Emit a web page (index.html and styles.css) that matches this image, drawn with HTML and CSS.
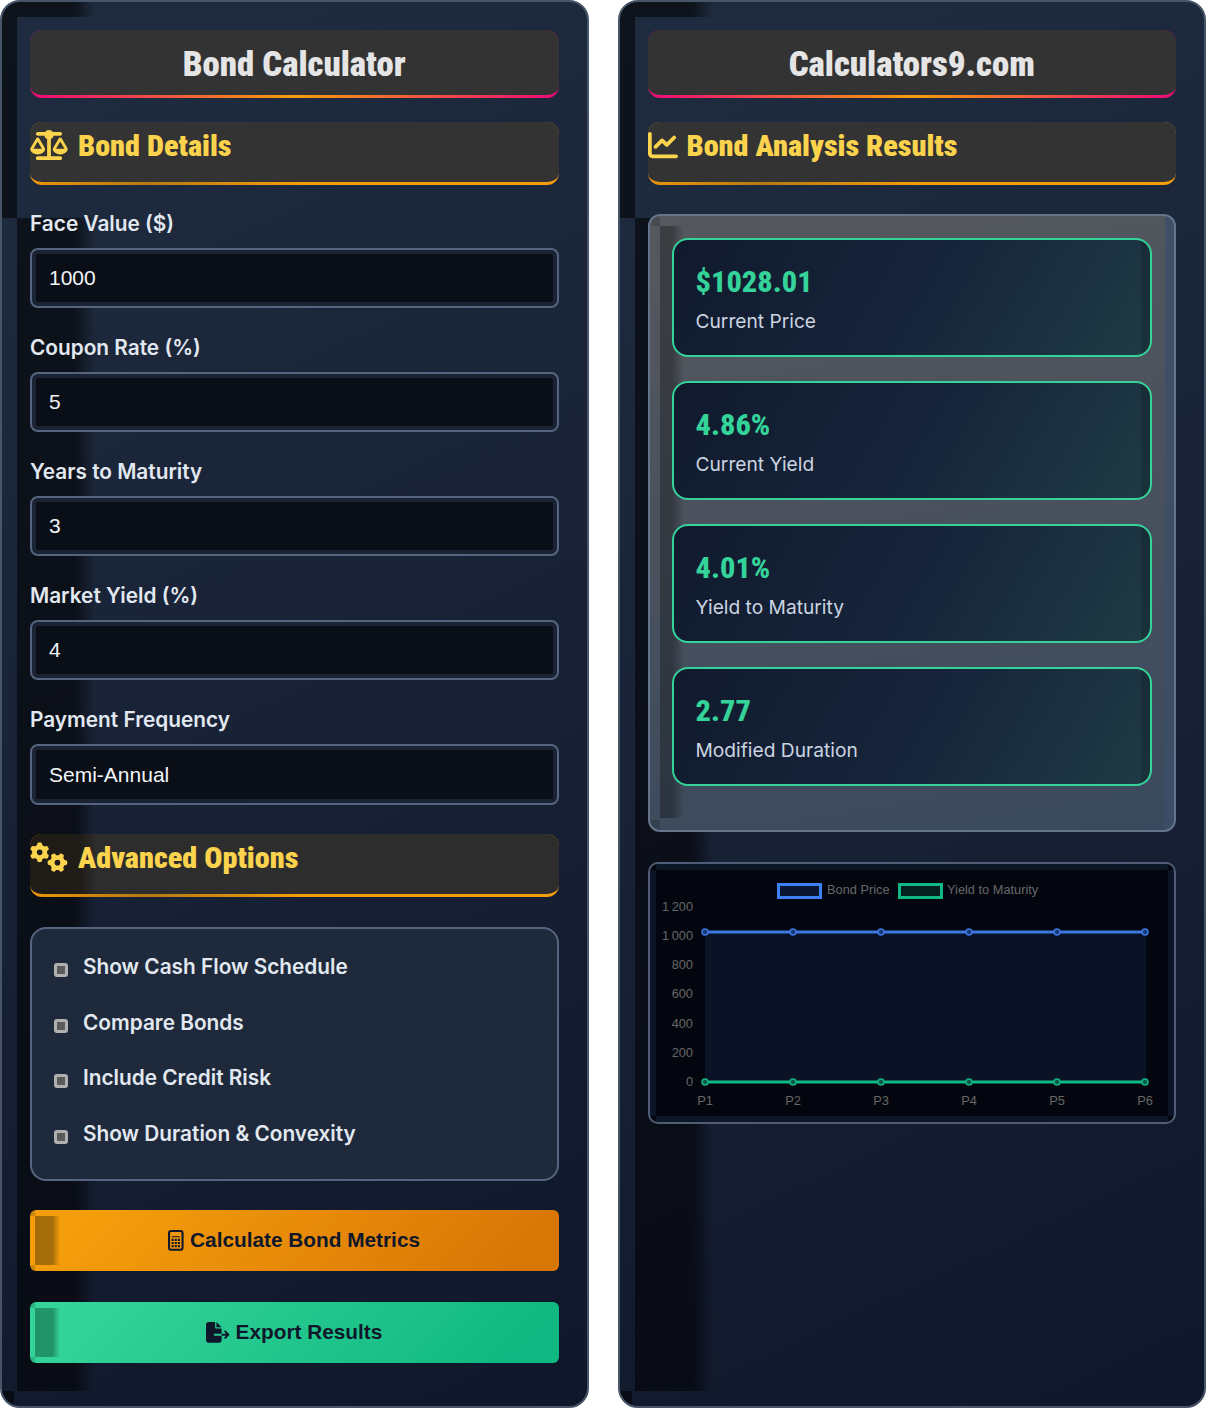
FILE: index.html
```html
<!DOCTYPE html>
<html lang="en">
<head>
<meta charset="utf-8">
<title>Bond Calculator</title>
<link rel="stylesheet" href="styles.css">
</head>
<body>
<main class="app">
  <section class="panel">
    <h1 class="title">Bond Calculator</h1>
    <h2 class="section"><svg class="ico wide" viewBox="0 0 640 512"><path fill="currentColor" d="M384 32H512c17.7 0 32 14.3 32 32s-14.3 32-32 32H398.4c-5.2 25.8-22.9 47.1-46.4 57.3V448H512c17.7 0 32 14.3 32 32s-14.3 32-32 32H320 128c-17.7 0-32-14.3-32-32s14.3-32 32-32H288V153.3c-23.5-10.3-41.2-31.6-46.4-57.3H128c-17.7 0-32-14.3-32-32s14.3-32 32-32H256c14.6-19.4 37.8-32 64-32s49.4 12.6 64 32zm55.6 288H584.4L512 195.8 439.6 320zM512 416c-62.9 0-115.2-34-126-78.9c-2.6-11 1-22.3 6.7-32.1l95.2-163.2c5-8.6 14.2-13.8 24.1-13.8s19.1 5.3 24.1 13.8l95.2 163.2c5.7 9.8 9.3 21.1 6.7 32.1C627.2 382 574.9 416 512 416zM126.8 195.8L54.4 320H199.3L126.8 195.8zM.9 337.1c-2.6-11 1-22.3 6.7-32.1l95.2-163.2c5-8.6 14.2-13.8 24.1-13.8s19.1 5.3 24.1 13.8l95.2 163.2c5.7 9.8 9.3 21.1 6.7 32.1C242 382 189.7 416 126.8 416S11.7 382 .9 337.1z"/></svg>Bond Details</h2>

    <div class="field first"><label for="face">Face Value ($)</label><input id="face" class="input" value="1000"></div>
    <div class="field"><label for="coupon">Coupon Rate (%)</label><input id="coupon" class="input" value="5"></div>
    <div class="field"><label for="years">Years to Maturity</label><input id="years" class="input" value="3"></div>
    <div class="field"><label for="yield">Market Yield (%)</label><input id="yield" class="input" value="4"></div>
    <div class="field"><label for="freq">Payment Frequency</label><select id="freq" class="input select"><option>Semi-Annual</option></select></div>

    <h2 class="section adv"><svg class="ico wide" viewBox="0 0 640 512"><path fill="currentColor" d="M308.5 135.3c7.1-6.3 9.9-16.2 6.2-25c-2.3-5.3-4.8-10.5-7.6-15.5L304 89.4c-3-5-6.3-9.9-9.8-14.6c-5.7-7.6-15.7-10.1-24.7-7.1l-28.2 9.3c-10.7-8.8-23-16-36.2-20.9L199 27.1c-1.9-9.3-9.1-16.7-18.5-17.8C173.9 8.4 167.2 8 160.4 8h-.7c-6.8 0-13.5 .4-20.1 1.2c-9.4 1.1-16.6 8.6-18.5 17.8L115 56.1c-13.3 5-25.5 12.1-36.2 20.9L50.5 67.8c-9-3-19-.5-24.7 7.1c-3.5 4.7-6.8 9.6-9.9 14.6l-3 5.3c-2.8 5-5.3 10.2-7.6 15.6c-3.7 8.7-.9 18.6 6.2 25l22.2 19.8C32.6 161.9 32 168.9 32 176s.6 14.1 1.7 20.9L11.5 216.7c-7.1 6.3-9.9 16.2-6.2 25c2.3 5.3 4.8 10.5 7.6 15.6l3 5.2c3 5.1 6.3 9.9 9.9 14.6c5.7 7.6 15.7 10.1 24.7 7.1l28.2-9.3c10.7 8.8 23 16 36.2 20.9l6.1 29.1c1.9 9.3 9.1 16.7 18.5 17.8c6.7 .8 13.5 1.2 20.4 1.2s13.7-.4 20.4-1.2c9.4-1.1 16.6-8.6 18.5-17.8l6.1-29.1c13.3-5 25.5-12.1 36.2-20.9l28.2 9.3c9 3 19 .5 24.7-7.1c3.5-4.7 6.8-9.5 9.8-14.6l3.1-5.4c2.8-5 5.3-10.2 7.6-15.5c3.7-8.7 .9-18.6-6.2-25l-22.2-19.8c1.1-6.8 1.7-13.8 1.7-20.9s-.6-14.1-1.7-20.9l22.2-19.8zM112 176a48 48 0 1 1 96 0 48 48 0 1 1 -96 0zM504.7 500.5c6.3 7.1 16.2 9.9 25 6.2c5.3-2.3 10.5-4.8 15.5-7.6l5.4-3.1c5-3 9.9-6.3 14.6-9.8c7.6-5.7 10.1-15.7 7.1-24.7l-9.3-28.2c8.8-10.7 16-23 20.9-36.2l29.1-6.1c9.3-1.9 16.7-9.1 17.8-18.5c.8-6.7 1.2-13.5 1.2-20.4s-.4-13.7-1.2-20.4c-1.1-9.4-8.6-16.6-17.8-18.5L583.9 307c-5-13.3-12.1-25.5-20.9-36.2l9.3-28.2c3-9 .5-19-7.1-24.7c-4.7-3.5-9.6-6.8-14.6-9.9l-5.3-3c-5-2.8-10.2-5.3-15.6-7.6c-8.7-3.7-18.6-.9-25 6.2l-19.8 22.2c-6.8-1.1-13.8-1.7-20.9-1.7s-14.1 .6-20.9 1.7l-19.8-22.2c-6.3-7.1-16.2-9.9-25-6.2c-5.3 2.3-10.5 4.8-15.6 7.6l-5.2 3c-5.1 3-9.9 6.3-14.6 9.9c-7.6 5.7-10.1 15.7-7.1 24.7l9.3 28.2c-8.8 10.7-16 23-20.9 36.2L315.1 313c-9.3 1.9-16.7 9.1-17.8 18.5c-.8 6.7-1.2 13.5-1.2 20.4s.4 13.7 1.2 20.4c1.1 9.4 8.6 16.6 17.8 18.5l29.1 6.1c5 13.3 12.1 25.5 20.9 36.2l-9.3 28.2c-3 9-.5 19 7.1 24.7c4.7 3.5 9.5 6.8 14.6 9.8l5.4 3.1c5 2.8 10.2 5.3 15.5 7.6c8.7 3.7 18.6 .9 25-6.2l19.8-22.2c6.8 1.1 13.8 1.7 20.9 1.7s14.1-.6 20.9-1.7l19.8 22.2zM464 304a48 48 0 1 1 0 96 48 48 0 1 1 0-96z"/></svg>Advanced Options</h2>

    <div class="options">
      <label class="option"><input type="checkbox">Show Cash Flow Schedule</label>
      <label class="option"><input type="checkbox">Compare Bonds</label>
      <label class="option"><input type="checkbox">Include Credit Risk</label>
      <label class="option"><input type="checkbox">Show Duration &amp; Convexity</label>
    </div>

    <button class="btn orange"><svg class="btn-ico calc" viewBox="0 0 15 20"><rect x="1" y="1" width="13" height="18" rx="2" fill="none" stroke="currentColor" stroke-width="2"/><path fill="currentColor" d="M3.500 6h8v1h-8zM3.500 8.500h2v2h-2zM6.500 8.500h2v2h-2zM9.500 8.500h2v2h-2zM3.500 11.500h2v2h-2zM6.500 11.500h2v2h-2zM9.500 11.500h2v2h-2zM3.500 14.500h2v2h-2zM6.500 14.500h2v2h-2zM9.500 14.500h2v2h-2z"/></svg>Calculate Bond Metrics</button>
    <button class="btn green"><svg class="btn-ico file" viewBox="0 0 576 512"><path fill="currentColor" d="M0 64C0 28.7 28.7 0 64 0H224V128c0 17.7 14.3 32 32 32H384V288H216c-13.3 0-24 10.7-24 24s10.7 24 24 24H384V448c0 35.3-28.7 64-64 64H64c-35.3 0-64-28.7-64-64V64zM384 336V288H494.1l-39-39c-9.4-9.4-9.4-24.6 0-33.9s24.6-9.4 33.9 0l80 80c9.4 9.4 9.4 24.6 0 33.9l-80 80c-9.4 9.4-24.6 9.4-33.9 0s-9.4-24.6 0-33.9l39-39H384zm0-208H256V0L384 128z"/></svg>Export Results</button>
  </section>

  <section class="panel">
    <h1 class="title">Calculators9.com</h1>
    <h2 class="section"><svg class="ico" viewBox="0 0 512 512"><path fill="currentColor" d="M64 64c0-17.7-14.3-32-32-32S0 46.3 0 64V400c0 44.2 35.8 80 80 80H480c17.7 0 32-14.3 32-32s-14.3-32-32-32H80c-8.8 0-16-7.2-16-16V64zm406.6 86.6c12.5-12.5 12.5-32.8 0-45.3s-32.8-12.5-45.3 0L320 210.7l-57.4-57.4c-12.5-12.5-32.8-12.5-45.3 0l-112 112c-12.5 12.5-12.5 32.8 0 45.3s32.8 12.5 45.3 0L240 221.3l57.4 57.4c12.5 12.5 32.8 12.5 45.3 0l128-128z"/></svg>Bond Analysis Results</h2>

    <div class="results">
      <div class="card"><div class="value">$1028.01</div><div class="name">Current Price</div></div>
      <div class="card"><div class="value">4.86%</div><div class="name">Current Yield</div></div>
      <div class="card"><div class="value">4.01%</div><div class="name">Yield to Maturity</div></div>
      <div class="card"><div class="value">2.77</div><div class="name">Modified Duration</div></div>
    </div>

    <div class="chart">
      <svg class="plot" viewBox="0 0 512 246" width="512" height="246">
        <rect class="fill-blue" x="49" y="62" width="441" height="150"/>
        <rect class="swatch-blue" x="122.500" y="14.500" width="42" height="13"/>
        <text class="tick" x="171" y="24">Bond Price</text>
        <rect class="swatch-green" x="243.500" y="14.500" width="42" height="13"/>
        <text class="tick" x="291" y="24">Yield to Maturity</text>
        <g class="tick end">
          <text x="37" y="41">1&#8201;200</text>
          <text x="37" y="70">1&#8201;000</text>
          <text x="37" y="99">800</text>
          <text x="37" y="128">600</text>
          <text x="37" y="158">400</text>
          <text x="37" y="187">200</text>
          <text x="37" y="216">0</text>
        </g>
        <g class="tick middle">
          <text x="49" y="235">P1</text>
          <text x="137" y="235">P2</text>
          <text x="225" y="235">P3</text>
          <text x="313" y="235">P4</text>
          <text x="401" y="235">P5</text>
          <text x="489" y="235">P6</text>
        </g>
        <g class="series blue">
          <path d="M49 62H489"/>
          <circle cx="49" cy="62" r="3"/><circle cx="137" cy="62" r="3"/><circle cx="225" cy="62" r="3"/><circle cx="313" cy="62" r="3"/><circle cx="401" cy="62" r="3"/><circle cx="489" cy="62" r="3"/>
        </g>
        <g class="series green">
          <path d="M49 212H489"/>
          <circle cx="49" cy="212" r="3"/><circle cx="137" cy="212" r="3"/><circle cx="225" cy="212" r="3"/><circle cx="313" cy="212" r="3"/><circle cx="401" cy="212" r="3"/><circle cx="489" cy="212" r="3"/>
        </g>
      </svg>
    </div>
  </section>
</main>
</body>
</html>
```

FILE: styles.css
```css
* { box-sizing: border-box; }
html, body { margin: 0; background: #fff; }
body { font-family: Inter, "Noto Sans", sans-serif; }

.app { display: grid; grid-template-columns: 1fr 1fr; column-gap: 29px; height: 1408px; }

.panel {
  --shade: rgba(0, 0, 0, .56);
  height: 1408px;
  padding: 28px 28px 0;
  border: 2px solid #475569;
  border-radius: 20px;
  background-color: #1e293b;
  background-repeat: no-repeat;
  background-image:
    linear-gradient(var(--shade), var(--shade)),
    linear-gradient(90deg, var(--shade) 74%, transparent),
    linear-gradient(90deg, var(--shade) 74%, transparent),
    linear-gradient(var(--shade), var(--shade)),
    linear-gradient(155deg, #1f2c3f 0%, #1a2438 40%, #0f172a 100%);
  background-size: 15px 216px, 78px 15px, 78px 1173px, 12px 15px, 100% 100%;
  background-position: 0 0, 15px 0, 15px 216px, 0 100%, 0 0;
}

.title, .section {
  margin: 0;
  border-bottom: 3px solid transparent;
  border-radius: 12px;
  font-family: Roboto, sans-serif;
  font-stretch: 75%;
  font-weight: 900;
}
.title {
  height: 68px;
  padding-top: 3px;
  line-height: 62px;
  text-align: center;
  font-size: 34.800px;
  color: #e5e5e5;
  background:
    linear-gradient(#333, #333) padding-box,
    linear-gradient(90deg, #ec0a78, #f59e0b 50%, #ec0a78) border-box;
}
.section {
  display: flex;
  align-items: center;
  height: 63px;
  margin-top: 24px;
  padding-bottom: 14px;
  font-size: 30.200px;
  color: #fcd34d;
  background:
    linear-gradient(#333, #333) padding-box,
    linear-gradient(90deg, #eb9509, #b87a12 22%, #f59e0b 52%, #f59e0b) border-box;
}
.section.adv {
  margin-top: 29px;
  background:
    linear-gradient(90deg, #1f1b17 50px, #2d2d2d 66px) padding-box,
    linear-gradient(90deg, #eb9509, #b87a12 22%, #f59e0b 52%, #f59e0b) border-box;
}
.ico { width: 30px; height: 30px; margin-right: 9px; flex: none; }
.ico.wide { width: 38px; margin-right: 10px; }

.field { margin-top: 28px; }
.field.first { margin-top: 27px; }
.field label {
  display: block;
  height: 24px;
  margin-bottom: 12px;
  line-height: 24px;
  font-size: 20.800px;
  font-weight: 600;
  color: #e2e8f0;
}
.input {
  display: block;
  width: 100%;
  height: 60px;
  padding: 0 17px;
  border: 2px solid #56657f;
  border-radius: 8px;
  outline: 0;
  font: 400 21px "Liberation Sans", Arial, sans-serif;
  color: #f1f5f9;
  background: #0a0e16;
  box-shadow: inset 0 0 0 4px #1a2334;
}
.select { height: 61px; appearance: none; -webkit-appearance: none; }

.options {
  display: grid;
  row-gap: 27.6px;
  margin-top: 30px;
  padding: 23.500px 22px 31.500px;
  border: 2px solid #56657f;
  border-radius: 16px;
  background: #1e293b;
}
.option {
  display: flex;
  align-items: center;
  height: 28px;
  font-size: 20.800px;
  font-weight: 600;
  color: #e2e8f0;
}
.option input {
  appearance: none;
  -webkit-appearance: none;
  width: 14px;
  height: 14px;
  margin: 7px 15px 0 0;
  border: 3px solid #b0b0b0;
  border-radius: 3px;
  background: #5b5b5b;
  flex: none;
}

.btn {
  display: flex;
  align-items: center;
  justify-content: center;
  width: 100%;
  height: 61px;
  padding: 0;
  border: 0;
  border-radius: 6px;
  font: 700 20.800px "Liberation Sans", Arial, sans-serif;
  color: #0f172a;
  background-repeat: no-repeat;
}
.btn-ico { height: 20.800px; margin-right: 6px; }
.btn-ico.calc { width: 15.600px; }
.btn-ico.file { width: 23.400px; }
.orange {
  --corner: #c98a0f;
  margin-top: 29px;
  background-image:
    linear-gradient(var(--corner), var(--corner)),
    linear-gradient(var(--corner), var(--corner)),
    linear-gradient(90deg, #a56e08 70%, transparent),
    linear-gradient(135deg, #f59e0b, #f59e0b 10%, #d97706 90%);
  background-size: 5px 6px, 5px 6px, 25px 49px, 100% 100%;
  background-position: 0 0, 0 100%, 5px 6px, 0 0;
}
.green {
  --corner: #2ab384;
  margin-top: 31px;
  background-image:
    linear-gradient(var(--corner), var(--corner)),
    linear-gradient(var(--corner), var(--corner)),
    linear-gradient(90deg, #22946a 70%, transparent),
    linear-gradient(135deg, #34d399, #34d399 10%, #10b981 90%);
  background-size: 5px 6px, 5px 6px, 25px 49px, 100% 100%;
  background-position: 0 0, 0 100%, 5px 6px, 0 0;
}

.results {
  display: grid;
  row-gap: 24px;
  margin-top: 29px;
  padding: 22px 22px 44px;
  border: 2px solid #64748b;
  border-radius: 12px;
  background-repeat: no-repeat;
  background-image:
    linear-gradient(rgba(0, 0, 0, .15), rgba(0, 0, 0, .15)),
    linear-gradient(90deg, rgba(0, 0, 0, .3) 50%, transparent),
    linear-gradient(rgba(0, 0, 0, .15), rgba(0, 0, 0, .15)),
    linear-gradient(90deg, rgba(59, 78, 104, .8), rgba(59, 78, 104, .8)),
    linear-gradient(170deg, #55585e 0%, #49515d 50%, #3a495d 100%);
  background-size: 10px 10px, 24px calc(100% - 22px), 10px 10px, 9px 100%, 100% 100%;
  background-position: 0 0, 10px 10px, 0 100%, 100% 0, 0 0;
}
.card {
  height: 119px;
  padding: 22px;
  border: 2px solid #34d399;
  border-radius: 16px;
  background-repeat: no-repeat;
  background-image:
    linear-gradient(rgba(0, 0, 0, .16), rgba(0, 0, 0, .16)),
    linear-gradient(120deg, #111a2d 0%, #16243a 50%, #1f3b45 100%);
  background-size: 9px 100%, 100% 100%;
  background-position: 100% 0, 0 0;
}
.value {
  height: 40px;
  margin-bottom: 7px;
  line-height: 39px;
  font-family: Roboto, sans-serif;
  font-stretch: 75%;
  font-weight: 800;
  font-size: 30.400px;
  color: #34d399;
}
.name { height: 24px; line-height: 24px; font-size: 19.200px; color: #cbd5e1; }

.chart {
  margin-top: 30px;
  padding: 6px;
  border: 2px solid #4f5d76;
  border-radius: 10px;
  background-color: #0d1627;
  background-repeat: no-repeat;
  background-image:
    linear-gradient(#03060f, #03060f), linear-gradient(#03060f, #03060f),
    linear-gradient(#03060f, #03060f), linear-gradient(#03060f, #03060f);
  background-size: 6px 6px;
  background-position: 0 0, 100% 0, 0 100%, 100% 100%;
}
.plot { display: block; background: #03060f; }
.tick, .tick text { font: 12.800px "Liberation Sans", Arial, sans-serif; fill: #666; }
.end text { text-anchor: end; }
.middle text { text-anchor: middle; }
.fill-blue { fill: #0a1226; }
.swatch-blue { fill: #0b1630; stroke: #3b82f6; stroke-width: 3; }
.swatch-green { fill: #05201f; stroke: #10b981; stroke-width: 3; }
.series path { fill: none; stroke-width: 3; }
.series circle { stroke-width: 1.500; }
.blue path, .blue circle { stroke: #3b78e0; }
.blue circle { fill: #1b3a78; }
.green path, .green circle { stroke: #10b981; }
.green circle { fill: #0a5c46; }
```
